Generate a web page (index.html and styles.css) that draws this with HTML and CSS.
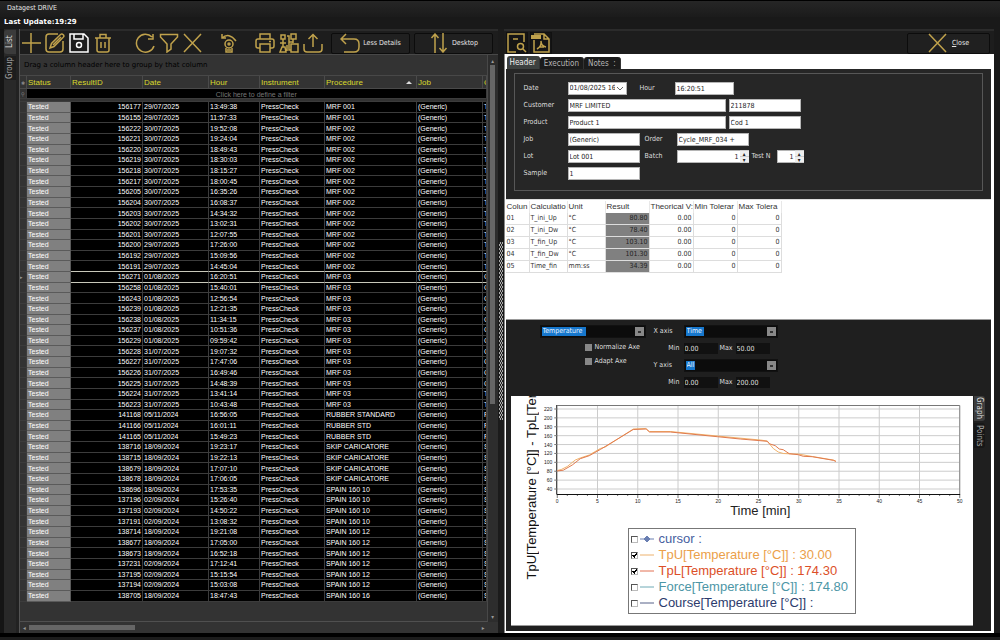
FILE: index.html
```html
<!DOCTYPE html>
<html lang="en">
<head>
<meta charset="utf-8">
<title>Datagest DRIVE</title>
<link rel="stylesheet" href="styles.css">
</head>
<body>
<header class="titlebar">Datagest DRIVE</header>
<div class="update">Last Update:19:29</div>
<main class="workspace">
  <nav class="side-tabs">
    <button class="side-tab active">List</button>
    <button class="side-tab">Group</button>
  </nav>

  <section class="list-panel">
    <div class="toolbar">
      <button class="tool" aria-label="Add"><svg viewBox="0 0 20 20"><path d="M1 10H20M10 0V20"/></svg></button>
      <button class="tool" aria-label="Edit"><svg viewBox="0 0 20 20"><path d="M13 1H4Q1 1 1 4V16Q1 19 4 19H15Q18 19 18 16V8M5 15L6.500 10.500L15.500 1.500Q17 0.500 18.500 2Q19.500 3.500 18 4.500L9 13.500ZM8 12L16 4"/></svg></button>
      <button class="tool save" aria-label="Save"><svg viewBox="0 0 20 20"><path d="M1 1H15L19 5V19H1ZM5 1V6H14V1"/><circle cx="10" cy="12" r="2.500"/></svg></button>
      <button class="tool" aria-label="Delete"><svg viewBox="0 0 20 20"><path d="M2 5H18M7 5V1.500H13V5M4 5V17Q4 19 6 19H14Q16 19 16 17V5M8 9V15M12 9V15"/></svg></button>
      <button class="tool group-start" aria-label="Refresh"><svg viewBox="0 0 20 20"><path d="M17 4A9 9 0 1 0 19 13M18 1V6H13"/></svg></button>
      <button class="tool" aria-label="Filter"><svg viewBox="0 0 20 20"><path d="M1.500 1.500H18.500V4L12 11V16L8 19V11L1.500 4Z"/></svg></button>
      <button class="tool" aria-label="Clear"><svg viewBox="0 0 20 20"><path d="M1 1L18 19M18 1L1 19"/></svg></button>
      <button class="tool group-start narrow" aria-label="Calibrate"><svg viewBox="0 0 20 20"><path d="M3 5Q10 -1 17 8M3 1V5H7M7 15V19H13V15M8 17H12"/><circle cx="10" cy="11" r="4"/><circle cx="10" cy="11" r="1"/></svg></button>
      <button class="tool group-start narrow" aria-label="Print"><svg viewBox="0 0 20 20"><path d="M5 6V1H15V6M5 15H3Q1 15 1 13V8Q1 6 3 6H17Q19 6 19 8V13Q19 15 17 15H15M5 11H15V19H5ZM14 8.500H16"/></svg></button>
      <button class="tool" aria-label="Devices"><svg viewBox="0 0 20 20"><path d="M2 2H6V6H2ZM12 1H17V6H12ZM1 10H7M4 6V14M1 19L3 14H6L7 19ZM8 3H10V17H12M10 9H14M14 6V10M12 11H19V19H12ZM8 12V18"/></svg></button>
      <button class="tool" aria-label="Export"><svg viewBox="0 0 20 20"><path d="M10 14V2M5.500 6L10 1.500L14.500 6M1 11V16Q1 19 4 19H16Q19 19 19 16V11"/></svg></button>
      <button class="wide first"><svg viewBox="0 0 20 20"><path d="M6 1L1 6L6 11M1 6H14Q19 6 19 11V14Q19 19 14 19H4"/></svg>Less Details</button>
      <button class="wide"><svg viewBox="0 0 20 20"><path d="M6 20V1M2.500 5L6 1L9.500 5M14 0V19M10.500 15L14 19L17.500 15"/></svg>Desktop</button>
    </div>
    <div class="grid-area">
      <div class="grid-view">
        <div class="group-hint">Drag a column header here to group by that column</div>
        <table class="results">
          <colgroup><col class="c-ind"><col class="c-status"><col class="c-id"><col class="c-date"><col class="c-hour"><col class="c-inst"><col class="c-proc"><col class="c-job"><col></colgroup>
          <thead>
            <tr class="head"><th>✱</th><th>Status</th><th>ResultID</th><th>Date</th><th>Hour</th><th>Instrument</th><th><span class="sorted">Procedure</span></th><th>Job</th><th>C</th></tr>
            <tr class="filter"><th>⚲</th><td colspan="8">Click here to define a filter</td></tr>
            <tr class="gap"><td colspan="9"></td></tr>
          </thead>
          <tbody id="rows"></tbody>
        </table>
      </div>
      <div class="vscroll"><span>▴</span><i></i><span>▾</span></div>
      <div class="hscroll"><span>◂</span><i></i><span>▸</span></div>
    </div>
  </section>

  <div class="splitter"><i></i></div>

  <section class="detail-panel">
    <div class="toolbar">
      <button class="tool boxed" aria-label="Preview"><svg viewBox="0 0 20 20"><path d="M9 19H1V1H17V9M6 6H11"/><circle cx="13.500" cy="13.500" r="3"/><path d="M16 16L19 19"/></svg></button>
      <button class="tool boxed" aria-label="PDF"><svg viewBox="0 0 20 20"><path d="M3 7V19H18V6L13 1H3M13 1V6H18"/><path class="solid" d="M0 2H10V6H0Z"/><path d="M6 16Q11 13 10 8M10 8Q10 13 15 14M8 14H13"/></svg></button>
      <button class="wide close"><svg viewBox="0 0 20 20"><path d="M1 1L18 19M18 1L1 19"/></svg><span><u>C</u>lose</span></button>
    </div>
    <div class="detail-body">
      <div class="tabs">
        <button class="tab active">Header</button><button class="tab">Execution</button><button class="tab">Notes &nbsp;:</button>
      </div>
      <form class="header-form">
        <div class="fields">
          <div class="row"><label for="date">Date</label><select id="date" class="w-date"><option>01/08/2025 16:20</option></select><label class="mid hour" for="hour">Hour</label><input id="hour" class="w-date" value="16:20:51"></div>
          <div class="row"><label for="cust">Customer</label><input id="cust" class="w-long" value="MRF LIMITED"><input aria-label="Customer code" class="w-std" value="211878"></div>
          <div class="row"><label for="prod">Product</label><input id="prod" class="w-long" value="Product 1"><input aria-label="Product code" class="w-std" value="Cod 1"></div>
          <div class="row"><label for="job">Job</label><input id="job" class="w-std" value="(Generic)"><label class="mid" for="order">Order</label><input id="order" class="w-std" value="Cycle_MRF_034 +"></div>
          <div class="row"><label for="lot">Lot</label><input id="lot" class="w-std" value="Lot 001"><label class="mid" for="batch">Batch</label><span class="spin w-std"><input id="batch" value="1"><span><button type="button">▴</button><button type="button">▾</button></span></span><label class="test" for="testn">Test N</label><span class="spin w-small"><input id="testn" value="1"><span><button type="button">▴</button><button type="button">▾</button></span></span></div>
          <div class="row"><label for="sample">Sample</label><input id="sample" class="w-std" value="1"></div>
        </div>
      </form>
      <div class="calc-area">
        <table class="calc">
          <colgroup><col class="k1"><col class="k2"><col class="k2"><col class="k3"><col class="k3"><col class="k3"><col class="k3"></colgroup>
          <thead><tr><th>Colun</th><th>Calculatio</th><th>Unit</th><th>Result</th><th>Theorical V:</th><th>Min Tolerar</th><th>Max Tolera</th></tr></thead>
          <tbody>
            <tr><td>01</td><td>T_ini_Up</td><td>°C</td><td>80.80</td><td>0.00</td><td>0</td><td>0</td></tr>
            <tr><td>02</td><td>T_ini_Dw</td><td>°C</td><td>78.40</td><td>0.00</td><td>0</td><td>0</td></tr>
            <tr><td>03</td><td>T_fin_Up</td><td>°C</td><td>103.10</td><td>0.00</td><td>0</td><td>0</td></tr>
            <tr><td>04</td><td>T_fin_Dw</td><td>°C</td><td>101.30</td><td>0.00</td><td>0</td><td>0</td></tr>
            <tr><td>05</td><td>Time_fin</td><td>mm:ss</td><td>34.39</td><td>0.00</td><td>0</td><td>0</td></tr>
          </tbody>
        </table>
      </div>
      <div class="graph-area">
        <form class="params">
          <div class="series">
            <span class="combo"><select aria-label="Series" class="hl-long"><option>Temperature</option></select><i></i></span>
            <label class="check"><input type="checkbox">Normalize Axe</label>
            <label class="check"><input type="checkbox">Adapt Axe</label>
          </div>
          <div class="axes">
            <label for="xaxis">X axis</label><span class="combo"><select id="xaxis" class="hl-mid"><option>Time</option></select><i></i></span>
            <label class="min" for="xmin">Min</label><span class="range"><input id="xmin" value="0.00"><label for="xmax">Max</label><input id="xmax" value="50.00"></span>
            <label for="yaxis">Y axis</label><span class="combo"><select id="yaxis" class="hl-short"><option>All</option></select><i></i></span>
            <label class="min" for="ymin">Min</label><span class="range"><input id="ymin" value="0.00"><label for="ymax">Max</label><input id="ymax" value="200.00"></span>
          </div>
        </form>
        <div class="graph-row">
          <div class="chart">
            <div class="y-title"><span>TpU[Temperature [°C]] - TpL[Temperature [°C]]</span></div>
            <svg class="plot" viewBox="541 396 432 124" role="img" aria-label="Temperature over time">
              <g id="grid"></g>
              <path class="frame" d="M557 405.500H959.500V494"/>
              <path class="axis" d="M556.500 405V494.500H960"/>
              <g id="ticks"></g>
              <polyline class="tpu" points="557,470.500 561,469.500 567,466.500 575,460 580,458 589,455 600,448.500 605,447 633,429 645.500,428.500 649,431.500 670,431.500 717,436 760,440 767,441 769,443.500 773,448.500 778,452 783,453.500 793,454 798,454 812,456.500 833,460 835.500,461"/>
              <polyline class="tpl" points="557,471 563,470.200 572,465 580,458.700 589,455.700 600,449.500 633,429.500 646,429 649.300,432 670,432 717,436.700 740,439 767,441.300 769,443.700 775,445.700 779,449 783,449.700 789,453.700 798,454.700 803,456.300 812,456.700 833,460.300 835.700,461.500"/>
              <text class="x-title" x="760" y="515">Time [min]</text>
            </svg>
            <div class="legend">
              <label class="cursor"><input type="checkbox"><svg viewBox="0 0 14 8"><path d="M0 4H14"/><path class="mark" d="M7 1L10 4L7 7L4 4Z"/></svg>cursor :</label>
              <label class="upper"><input type="checkbox" checked><svg viewBox="0 0 14 8"><path d="M0 4H14"/></svg>TpU[Temperature [°C]] : 30.00</label>
              <label class="lower"><input type="checkbox" checked><svg viewBox="0 0 14 8"><path d="M0 4H14"/></svg>TpL[Temperature [°C]] : 174.30</label>
              <label class="force"><input type="checkbox"><svg viewBox="0 0 14 8"><path d="M0 4H14"/></svg>Force[Temperature [°C]] : 174.80</label>
              <label class="course"><input type="checkbox"><svg viewBox="0 0 14 8"><path d="M0 4H14"/></svg>Course[Temperature [°C]] :</label>
            </div>
          </div>
          <nav class="graph-tabs"><button class="active">Graph</button><button>Points</button></nav>
        </div>
      </div>
    </div>
  </section>
</main>
<footer class="bottom"></footer>
<script src="script.js"></script>
</body>
</html>
```
FILE: styles.css
```css
* { box-sizing: border-box; }
body {
  margin: 0; height: 100vh; min-width: 900px; overflow: hidden;
  display: flex; flex-direction: column;
  background: #191919; color: #e6e6e6;
  font: 7px/9px "DejaVu Sans Condensed", "DejaVu Sans", sans-serif;
}
button, input, select { font: inherit; color: inherit; margin: 0; padding: 0; border: 0; border-radius: 0; background: none; }
select { appearance: none; }
svg { fill: none; stroke: currentColor; display: block; }

.titlebar { height: 17px; padding: 3px 7px; border-top: 1px solid #000; background: linear-gradient(#262626, #1b1b1b); }
.update { height: 12px; padding: 1px 4px; font-family: "DejaVu Sans", sans-serif; font-weight: bold; color: #fff; }
.workspace { flex: 1; display: flex; min-height: 0; padding-right: 6px; }
.bottom { height: 7px; background: #000; border-bottom: 3px solid #1c1c1c; }

.side-tabs { width: 19px; padding: 1px 0; background: #292929; border-left: 4px solid #151515; border-right: 3px solid #222; }
.side-tab {
  display: block; width: 12px; height: 24px; margin-bottom: 2px; border-radius: 0 3px 3px 0;
  writing-mode: vertical-rl; transform: rotate(180deg); text-align: center; color: #a5a5a5;
  background: #1d1d1d; font-size: 8px; line-height: 12px;
}
.side-tab.active { background: #3b3b3b; color: #ddd; }

.list-panel { flex: 478 1 0; min-width: 0; display: flex; flex-direction: column; border-left: 1px solid #555; }
.toolbar { height: 25px; flex: none; display: flex; align-items: center; gap: 4px; padding: 2px 4px 1px 1px; background: #1d1d1d; border-top: 2px solid #2b2b2b; }
.tool { width: 20px; height: 20px; color: #c0a24c; flex: none; }
.tool svg, .wide svg { width: 20px; height: 20px; stroke-width: 1.5; }
.tool .solid { fill: currentColor; stroke: none; }
.save { color: #fff; }
.group-start { margin-left: 18px; }
.narrow { margin-left: 12px; }
.wide { width: 79px; height: 21px; display: flex; align-items: center; justify-content: center; gap: 3px; border: 1px solid #0c0c0c; border-radius: 2px; background: #202020; }
.wide svg { color: #c0a24c; }
.first { margin-left: 4px; }
.boxed { background: #151515; outline: 1px solid #111; }
.boxed svg { width: 20px; height: 20px; }
.close { width: 83px; margin-left: auto; gap: 4px; }
.detail-panel .toolbar { padding-left: 3px; }

.grid-area { flex: 1; min-height: 0; display: grid; grid-template: 1fr 11px / 1fr 10px; background: #333; border-top: 1px solid #484848; }
.grid-view { overflow: hidden; border-right: 1px solid #484848; border-bottom: 1px solid #505050; }
.group-hint { height: 21px; padding: 6px 4px; color: #000; font-family: "DejaVu Sans", sans-serif; border-bottom: 1px solid #484848; }
.results { width: 100%; height: 526px; table-layout: fixed; border-spacing: 0; font: 7px/8px "Liberation Sans", Arial, sans-serif; }
.results th, .results td { padding: 1px 1px 0; overflow: hidden; white-space: nowrap; text-align: left; font-weight: normal; border-right: 1px solid #3c3c3c; border-bottom: 1px solid #3c3c3c; }
.c-ind { width: 7px; } .c-status { width: 44px; } .c-id { width: 72px; } .c-date { width: 66px; }
.c-hour { width: 51px; } .c-inst { width: 65px; } .c-proc { width: 92px; } .c-job { width: 66px; }
.results .head { height: 13px; }
.results .head th { color: #d9d92c; font-size: 8px; border-color: #4a4a4a; }
.results th:first-child, .results .head th:first-child { font-size: 5px; line-height: 6px; color: #888; }
.sorted { display: flex; justify-content: space-between; padding-right: 3px; }
.sorted::after { content: ""; align-self: center; border: 3px solid transparent; border-top: 0; border-bottom-color: #ddd; }
.results .filter { height: 10px; }
.results .filter td { background: #000; color: #777; text-align: center; line-height: 7px; }
.results .gap { height: 3px; }
.results .gap td { padding: 0; line-height: 2px; border-right: 0; }
.results tbody td { background: #000; color: #fff; }
.results tbody td:first-child { background: #333; font-size: 5px; color: #999; padding: 0; }
.results tbody td:nth-child(2) { background: #808080; border-color: #5a5a5a; }
.results tbody td:nth-child(3) { text-align: right; }
.results .before td:nth-child(n+3), .results .current td:nth-child(n+3) { border-bottom-color: #c8c8ba; }

.vscroll, .hscroll { display: flex; align-items: center; justify-content: space-between; font-size: 6px; line-height: 7px; color: #999; }
.vscroll { flex-direction: column; background: #2d2d2d; padding: 2px 0; }
.vscroll i { width: 5px; flex: 0 1 339px; background: #666; margin: 1px 0 auto; }
.hscroll { grid-column: 1 / -1; padding: 0 13px 0 3px; }
.hscroll i { width: 106px; height: 5px; background: #666; margin: 0 auto 0 3px; }

.splitter { width: 6px; display: flex; justify-content: flex-end; align-items: center; background: #1b1b1b; }
.splitter i { width: 4px; height: 178px; margin-right: 1px; background: repeating-conic-gradient(#aaa 0 25%, #222 0 50%) 0 0 / 2px 4px; }

.detail-panel { flex: 491 1 0; min-width: 0; display: flex; flex-direction: column; }
.detail-body { flex: 1; min-height: 0; display: flex; flex-direction: column; background: #fff; padding: 2px 3px 2px 1px; border-left: 1px solid #888; }
.tabs { display: flex; padding-left: 1px; height: 13px; align-items: flex-end; }
.tab { height: 12px; padding: 0 4px; background: #1b1b1b; color: #b5b5b5; border-radius: 3px 3px 0 0; border-right: 1px solid #333; font-size: 8px; }
.tab.active { height: 13px; background: #3d4140; color: #eee; padding: 0 3px; }
.header-form { background: #262626; padding: 4px 8px 8px; }
.fields { border: 1px solid #575757; padding: 8px 9px 10px; display: grid; gap: 4px; color: #ddd; }
.row { display: flex; align-items: center; height: 13px; gap: 3px; }
.row > label { width: 41px; }
.row > .mid { width: 29px; margin-left: 2px; }
.row > .hour { width: 32px; margin-left: 10px; }
.row > .test { width: 22px; white-space: nowrap; }
.row input, .row select { height: 13px; background: #fff; color: #222; border: 1px solid #b5b5b5; padding: 0 1px; }
.row .w-date { width: 59px; }
.row .w-long { width: 158px; }
.row .w-std { width: 72px; }
.row .w-small { width: 27px; }
.row select.w-date {
  padding-right: 11px;
  background:
    linear-gradient(-45deg, transparent 40%, #666 40% 65%, transparent 65%) right 3px center / 3px 3px no-repeat,
    linear-gradient(45deg, transparent 40%, #666 40% 65%, transparent 65%) right 6px center / 3px 3px no-repeat,
    #fff;
}
.spin { display: flex; background: #fff; }
.row .spin input { flex: 1; min-width: 0; text-align: right; border-right: 0; }
.spin > span { width: 9px; display: grid; background: #ccc; gap: 1px; padding: 1px 0; }
.spin button { background: #eee; color: #222; font-size: 6px; line-height: 5px; height: 5px; }

.calc-area { height: 120px; border-top: 1px solid #ddd; }
.calc { table-layout: fixed; width: 276px; border-spacing: 0; color: #333; margin-top: 1px; }
.k1 { width: 24px; } .k2 { width: 38px; } .k3 { width: 44px; }
.calc th { height: 12px; padding: 0 1px; font: 8px/10px "Liberation Sans", Arial, sans-serif; text-align: left; overflow: hidden; white-space: nowrap; border-right: 1px solid #e8e8e8; }
.calc td { height: 12px; padding: 0 1px; border-right: 1px solid #ddd; border-bottom: 1px solid #ddd; }
.calc td:nth-child(n+4) { text-align: right; }
.calc td:nth-child(4) { background: #808080; color: #222; }

.graph-area { flex: 1; min-height: 0; display: flex; flex-direction: column; background: #1f1f1f; border-top: 1px solid #999; }
.params { height: 76px; padding: 5px 4px 0 34px; display: flex; align-items: flex-start; gap: 8px; color: #ddd; }
.series { width: 106px; display: grid; gap: 5px; }
.combo { display: flex; height: 13px; padding: 1px; background: #0c0c0c; border: 1px solid #111; }
.combo select { flex: 1; color: #e6f2ff; padding-left: 1px; background: linear-gradient(#1677cd, #1677cd) 0 0 / 44px 100% no-repeat; }
.combo .hl-mid { background-size: 18px 100%; }
.combo .hl-short { background-size: 9px 100%; }
.combo i { width: 9px; background: linear-gradient(#333, #333) center 4px / 3px 2px no-repeat, #888; }
.check { display: flex; align-items: center; gap: 3px; height: 9px; padding-left: 45px; }
.check input { appearance: none; width: 7px; height: 7px; background: #888; }
.axes { display: grid; grid-template-columns: 30px 94px; gap: 4px 0; align-items: center; }
.axes > .min { text-align: right; padding-right: 4px; }
.range { display: flex; align-items: center; gap: 2px; height: 13px; }
.range input { width: 34px; height: 11px; flex: none; background: #111; padding: 0 1px; }
.range label { flex: none; width: 14px; }
.graph-row { flex: 1; min-height: 0; display: flex; padding: 0 5px 5px 5px; }
.chart { flex: 1; min-width: 0; display: grid; grid-template: 124px 1fr / 30px 1fr; background: #fff; color: #111; border-bottom: 1px solid #999; font: 13px/16px "Liberation Sans", Arial, sans-serif; }
.y-title { grid-row: 1 / 3; position: relative; overflow: hidden; height: 184px; }
.y-title span { position: absolute; left: 13px; bottom: 0; writing-mode: vertical-rl; transform: rotate(180deg); white-space: nowrap; }
.plot { width: 100%; height: 124px; stroke-width: 1; }
.plot .grid { stroke: #ccc; }
.plot .frame { stroke: #777; }
.plot .axis { stroke: #111; }
.plot text { fill: #222; stroke: none; font-size: 5px; }
.plot .x-title { font-size: 13px; text-anchor: middle; }
.tpu { stroke: #f2b36b; }
.tpl { stroke: #e07a4e; }
.legend { justify-self: start; align-self: start; margin: 8px 0 0 87px; width: 228px; padding: 2px; border: 1px solid #777; }
.legend label { display: flex; align-items: center; height: 16px; white-space: nowrap; }
.legend input { appearance: none; width: 7px; height: 7px; border: 1px solid #bbb; border-top-color: #555; border-left-color: #555; margin-right: 2px; }
.legend input:checked { background: linear-gradient(-45deg, transparent 40%, #000 40% 70%, transparent 70%) 2px 0 / 4px 4px no-repeat, linear-gradient(45deg, transparent 40%, #000 40% 70%, transparent 70%) 0 2px / 3px 3px no-repeat; }
.legend svg { width: 14px; height: 8px; margin-right: 5px; opacity: .8; }
.legend .mark { fill: currentColor; }
.cursor { color: #4560a0; } .upper { color: #eba04a; } .lower { color: #dc4f28; } .force { color: #4d96a6; } .course { color: #2c3b6c; }
.graph-tabs { width: 13px; padding-left: 1px; }
.graph-tabs button { display: block; width: 11px; height: 25px; margin-bottom: 2px; border-radius: 0 3px 3px 0; writing-mode: vertical-rl; color: #aaa; background: #171717; font-size: 8px; line-height: 11px; text-align: center; }
.graph-tabs .active { background: #3d3d3d; color: #ddd; }
```
FILE: script.js
```javascript
const results = [
  ["29/07/2025", "MRF 001", "T", "156177 13:49:38,156155 11:57:33"],
  ["30/07/2025", "MRF 002", "T", "156222 19:52:08,156221 19:24:04,156220 18:49:43,156219 18:30:03,156218 18:15:27,156217 18:00:45,156205 16:35:26,156204 16:08:37,156203 14:34:32,156202 13:02:31,156201 12:07:55"],
  ["29/07/2025", "MRF 002", "T", "156200 17:26:00,156192 15:09:56,156191 14:45:04"],
  ["01/08/2025", "MRF 03", "C", "156271 16:20:51,156258 15:40:01,156243 12:56:54,156239 12:21:35,156238 11:34:15,156237 10:51:36,156229 09:59:42"],
  ["31/07/2025", "MRF 03", "C", "156228 19:07:32,156227 17:47:06,156226 16:49:46,156225 14:48:39"],
  ["31/07/2025", "MRF 03", "T", "156224 13:41:14,156223 10:43:48"],
  ["05/11/2024", "RUBBER STANDARD", "F", "141168 16:56:05"],
  ["05/11/2024", "RUBBER STD", "F", "141166 16:01:11,141165 15:49:23"],
  ["18/09/2024", "SKIP CARICATORE", "S", "138716 19:23:17,138715 19:22:13,138679 17:07:10,138678 17:06:05"],
  ["18/09/2024", "SPAIN 160 10", "S", "138696 17:53:35"],
  ["02/09/2024", "SPAIN 160 10", "S", "137196 15:26:40,137193 14:50:22,137191 13:08:32"],
  ["18/09/2024", "SPAIN 160 12", "S", "138714 19:21:08,138677 17:05:00,138673 16:52:18"],
  ["02/09/2024", "SPAIN 160 12", "S", "137231 17:12:41,137195 15:15:54,137194 15:03:08"],
  ["18/09/2024", "SPAIN 160 16", "S", "138705 18:47:43"]
];
const rows = [];
for (const [date, procedure, code, entries] of results) {
  for (const entry of entries.split(",")) {
    const [id, hour] = entry.split(" ");
    rows.push([id, date, hour, "PressCheck", procedure, "(Generic)", code]);
  }
}
const current = rows.findIndex(r => r[0] === "156271");
document.getElementById("rows").innerHTML = rows.map((r, i) => {
  const cls = i === current ? "current" : i === current - 1 ? "before" : "";
  return `<tr class="${cls}"><td>${i === current ? "▸" : ""}</td><td>Tested</td>${r.map(v => `<td>${v}</td>`).join("")}</tr>`;
}).join("");

let grid = "", ticks = "";
const X0 = 557, X1 = 959.5, step = (X1 - X0) / 10;
for (let i = 0; i <= 10; i++) {
  const x = X0 + i * step;
  if (i > 0 && i < 10) grid += `M${x} 406V494`;
  ticks += `<text x="${x}" y="503" text-anchor="middle">${i * 5}</text>`;
}
let marks = "";
for (let i = 0; i <= 40; i++) marks += `M${X0 + i * step / 4} 495v${i % 4 ? 1 : 3}`;
for (let v = 40; v <= 220; v += 20) {
  const y = 489 - (v - 40) * 80 / 180;
  grid += `M557 ${y}H959`;
  marks += `M554 ${y}h3`;
  ticks += `<text x="552" y="${y + 2}" text-anchor="end">${v}</text>`;
}
document.getElementById("grid").innerHTML = `<path class="grid" d="${grid}"/>`;
document.getElementById("ticks").innerHTML = `<path class="frame" d="${marks}"/>${ticks}`;
```
